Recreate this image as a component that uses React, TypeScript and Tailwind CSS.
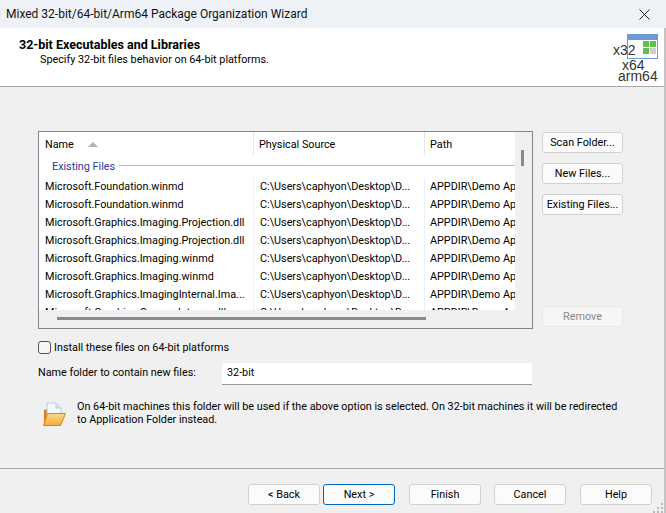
import React from "react";

const rows = [
  "Microsoft.Foundation.winmd",
  "Microsoft.Foundation.winmd",
  "Microsoft.Graphics.Imaging.Projection.dll",
  "Microsoft.Graphics.Imaging.Projection.dll",
  "Microsoft.Graphics.Imaging.winmd",
  "Microsoft.Graphics.Imaging.winmd",
  "Microsoft.Graphics.ImagingInternal.Ima...",
  "Microsoft.Graphics.Canvas.Interop.dll",
];

function Btn({ label, cls = "" }: { label: string; cls?: string }) {
  return (
    <div className={"flex h-[21px] items-center justify-center whitespace-nowrap rounded-[3px] border border-[#d0d0d0] bg-[#fbfbfb] pt-px text-black " + cls}>
      {label}
    </div>
  );
}

function FolderIcon() {
  return (
    <svg width="26" height="26" viewBox="0 0 26 26" className="shrink-0">
      <defs>
        <linearGradient id="fold" x1="0" y1="0" x2="0" y2="1">
          <stop offset="0" stopColor="#fcd98c" />
          <stop offset="1" stopColor="#f6a93e" />
        </linearGradient>
      </defs>
      <path d="M3 9l3-1 0 8-3 8z" fill="#de7a12" />
      <path d="M6 2h9l5 5v11H6z" fill="#f2f8fd" stroke="#a6d2ea" strokeWidth="1" />
      <path d="M15 2v5h5" fill="#d3e9f6" stroke="#a6d2ea" strokeWidth="1" />
      <path d="M2.5 24.5l4-12h18l-5 12z" fill="url(#fold)" stroke="#dd8414" strokeWidth="1" />
    </svg>
  );
}

export default function App() {
  return (
    <div className="flex h-[513px] w-[666px] flex-col overflow-hidden bg-[#f0f0f0] text-[10.8px] leading-[18px] text-black [font-family:'Roboto','Open_Sans',sans-serif]">
      <div className="flex h-[28px] shrink-0 items-center justify-between bg-[#eef2f6] pl-[6px] pr-[16px]">
        <span className="text-[12px] text-[#111]">Mixed 32-bit/64-bit/Arm64 Package Organization Wizard</span>
        <svg width="11" height="11" viewBox="0 0 11 11"><path d="M0.5 0.5l10 10M10.5 0.5l-10 10" stroke="#222" strokeWidth="1" /></svg>
      </div>
      <div className="relative flex min-h-0 flex-1 flex-col border-r-2 border-[#c4c4c4]">
        <div className="flex h-[59px] shrink-0 justify-between border-b border-[#a8a8a8] bg-white pl-[19px]">
          <div className="pt-[8px]">
            <div className="text-[12.5px] font-bold">32-bit Executables and Libraries</div>
            <div className="pl-[21px] leading-[12px]">Specify 32-bit files behavior on 64-bit platforms.</div>
          </div>
          <div className="relative w-[56px]">
            <div className="absolute left-[19px] top-[6px] flex h-[25px] w-[31px] flex-col border border-[#6f9ad8] bg-white">
              <div className="h-[5px] bg-[#6f9ad8]" />
              <div className="ml-[15px] mt-[1px] grid w-[13px] grid-cols-2 gap-px">
                <div className="h-[6px] bg-[#5ec04a]" /><div className="h-[6px] bg-[#5ec04a]" />
                <div className="h-[6px] bg-[#5ec04a]" /><div className="h-[6px] bg-[#cfcfcf]" />
              </div>
            </div>
            <span className="absolute left-[5px] top-[14px] text-[14px] leading-[17px] text-[#333] [font-family:'Liberation_Sans']">x32</span>
            <span className="absolute left-[14px] top-[29px] text-[14px] leading-[17px] text-[#333] [font-family:'Liberation_Sans']">x64</span>
            <span className="absolute left-[10px] top-[40px] text-[14px] leading-[17px] text-[#333] [font-family:'Liberation_Sans']">arm64</span>
          </div>
        </div>

        <div className="flex pl-[38px] pt-[44px]">
          <div className="flex h-[198px] w-[495px] shrink-0 flex-col border border-[#84848c] bg-[#f0f0f0]">
            <div className="flex h-[178px] overflow-hidden">
              <div className="w-[476px] shrink-0 overflow-hidden bg-white">
                <div className="flex h-[23px]">
                  <div className="flex w-[215px] items-center border-r border-[#e6e6e6] pl-[6px] pt-[2px]">
                    <span className="w-[28px]">Name</span>
                    <svg width="10" height="5" viewBox="0 0 10 5" className="ml-[15px]"><path d="M0 5L5 0l5 5z" fill="#b4b4a8" /></svg>
                  </div>
                  <div className="flex w-[171px] items-center border-r border-[#e6e6e6] pl-[5px] pt-[2px]">Physical Source</div>
                  <div className="flex items-center pl-[5px] pt-[2px]">Path</div>
                </div>
                <div className="flex h-[23px] items-center pl-[13px] text-[#2a3a96]">
                  Existing Files
                  <div className="mb-[2px] ml-[4px] h-px flex-1 bg-[#a9bfe6]" />
                </div>
                {rows.map((r, i) => (
                  <div key={i} className="flex h-[18px] whitespace-nowrap">
                    <div className="w-[215px] overflow-hidden border-r border-[#e8f1fb] pl-[6px]">{r}</div>
                    <div className="w-[171px] overflow-hidden border-r border-[#e8f1fb] pl-[6px]">C:\Users\caphyon\Desktop\D...</div>
                    <div className="flex-1 overflow-hidden pl-[5px]">APPDIR\Demo Ap</div>
                  </div>
                ))}
              </div>
              <div className="flex-1 pl-[6px] pt-[18px]">
                <div className="h-[16px] w-[3px] bg-[#8a8a8a]" />
              </div>
            </div>
            <div className="ml-[18px] mt-[7px] h-[3px] w-[369px] bg-[#8a8a8a]" />
          </div>
          <div className="ml-[9px] flex w-[81px] flex-col">
            <Btn label="Scan Folder..." cls="mt-px !pt-0" />
            <Btn label="New Files..." cls="mt-[10px] !pt-0" />
            <Btn label="Existing Files..." cls="mt-[10px] !pt-0" />
            <div className="mt-[91px] flex h-[21px] items-center justify-center rounded-[3px] border border-[#e6e6e6] bg-[#f6f6f6] pt-px text-[#888]">Remove</div>
          </div>
        </div>

        <div className="mt-[10px] flex h-[16px] items-center pl-[38px]">
          <div className="h-[13px] w-[13px] rounded-[3px] border border-[#555] bg-[#f6f6f6]" />
          <span className="ml-[3px] pt-px">Install these files on 64-bit platforms</span>
        </div>
        <div className="mt-[7px] flex h-[23px] items-center pl-[38px]">
          <span className="w-[184px] whitespace-nowrap pb-px">Name folder to contain new files:</span>
          <div className="flex h-[22px] w-[310px] items-center border-b border-[#999] bg-white pb-px pl-[5px]">32-bit</div>
        </div>
        <div className="mt-[16px] flex pl-[41px]">
          <FolderIcon />
          <div className="-mt-px ml-[10px] w-[546px] leading-[13px]">
            On 64-bit machines this folder will be used if the above option is selected. On 32-bit machines it will be redirected to Application Folder instead.
          </div>
        </div>

        <div className="mt-auto h-[45px] border-t border-[#a8a8a8]">
          <div className="flex pl-[248px] pt-[15px]">
            <Btn label="< Back" cls="w-[72px]" />
            <Btn label="Next >" cls="ml-[3px] w-[72px] !border-[#0067c0]" />
            <Btn label="Finish" cls="ml-[14px] w-[72px]" />
            <Btn label="Cancel" cls="ml-[13px] w-[72px]" />
            <Btn label="Help" cls="ml-[14px] w-[72px]" />
          </div>
        </div>
        <svg width="12" height="10" viewBox="0 0 12 10" className="absolute bottom-0 right-0" fill="#b8b8b8">
          <rect x="9" y="0" width="2" height="2" />
          <rect x="5" y="4" width="2" height="2" /><rect x="9" y="4" width="2" height="2" />
          <rect x="1" y="8" width="2" height="2" /><rect x="5" y="8" width="2" height="2" /><rect x="9" y="8" width="2" height="2" />
        </svg>
      </div>
    </div>
  );
}
